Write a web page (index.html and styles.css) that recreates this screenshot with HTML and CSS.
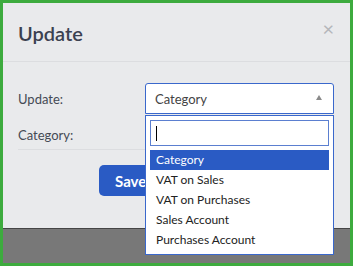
FILE: index.html
```
<!DOCTYPE html>
<html>
<head>
<meta charset="utf-8">
<link rel="stylesheet" href="styles.css">
</head>
<body>
<div class="frame">
  <div class="modal">
    <div class="modal-header">
      <h1 class="title">Update</h1>
      <span class="close">×</span>
    </div>
    <div class="modal-body">
      <div class="row row-update">
        <label class="label">Update:</label>
        <div class="select">
          <span class="select-text">Category</span>
          <span class="arrow"></span>
        </div>
      </div>
      <div class="row row-category">
        <label class="label">Category:</label>
      </div>
      <div class="actions">
        <button class="btn">Save</button>
      </div>
    </div>
  </div>
  <div class="backdrop"></div>
  <div class="dropdown">
    <div class="search"><span class="caret"></span></div>
    <ul class="options">
      <li class="option active">Category</li>
      <li class="option">VAT on Sales</li>
      <li class="option">VAT on Purchases</li>
      <li class="option">Sales Account</li>
      <li class="option">Purchases Account</li>
    </ul>
  </div>
</div>
</body>
</html>
```
FILE: styles.css
```
* { box-sizing: border-box; }
html, body { margin: 0; padding: 0; }
body {
  font-family: Lato, "Open Sans", sans-serif;
  width: 353px;
  height: 266px;
  overflow: hidden;
}
.frame {
  position: relative;
  width: 353px;
  height: 266px;
  border: 3px solid #3dab3e;
  display: flex;
  flex-direction: column;
  background: #787878;
}
.modal {
  height: 225px;
  background: #e9eaec;
  display: flex;
  flex-direction: column;
}
.modal-header {
  height: 59px;
  border-bottom: 1px solid #dcdde0;
  display: flex;
  align-items: center;
  justify-content: space-between;
  padding: 0 16px 0 15px;
}
.title {
  margin: 0;
  font-size: 20px;
  font-weight: 600;
  color: #3b4150;
  line-height: 24px;
  padding-top: 2px;
}
.close {
  font-size: 20px;
  color: #b4b6ba;
  line-height: 20px;
  margin-top: -9px;
}
.modal-body {
  padding: 21px 16px 0 15px;
}
.row {
  display: flex;
  align-items: center;
}
.row-update { height: 31px; }
.label {
  width: 127px;
  font-size: 13px;
  color: #454a55;
}
.select {
  width: 189px;
  height: 31px;
  background: #fff;
  border: 1px solid #3a68cc;
  border-radius: 3px 3px 0 0;
  display: flex;
  align-items: center;
  justify-content: space-between;
  padding: 0 11px 0 9px;
}
.select-text {
  font-size: 13px;
  color: #444;
}
.arrow {
  width: 0;
  height: 0;
  border-left: 3.5px solid transparent;
  border-right: 3.5px solid transparent;
  border-bottom: 5px solid #8a8a8a;
  margin-top: -3px;
}
.row-category {
  height: 36px;
  border-bottom: 1px solid #dcdde0;
  align-items: flex-start;
  padding-top: 13px;
}
.actions {
  padding: 15px 0 0 81px;
}
.btn {
  width: 90px;
  height: 31px;
  padding: 0 0 0 16px;
  text-align: left;
  background: #2a5bc4;
  color: #fff;
  border: none;
  border-radius: 5px;
  font-family: Lato, sans-serif;
  font-weight: 700;
  font-size: 15px;
}
.backdrop {
  flex: 1;
  border-top: 1px solid #454545;
  background: #787878;
}
.dropdown {
  position: absolute;
  left: 142px;
  top: 112px;
  width: 189px;
  height: 140px;
  background: #fff;
  border: 1px solid #3a68cc;
  padding: 4px;
}
.search {
  height: 26px;
  border: 1px solid #5b7fd0;
  display: flex;
  align-items: center;
  padding-left: 5px;
}
.caret {
  width: 1px;
  height: 15px;
  background: #000;
}
.options {
  list-style: none;
  margin: 4px 0 0;
  padding: 0;
}
.option {
  height: 20px;
  line-height: 20px;
  font-size: 12px;
  color: #222;
  padding-left: 6px;
}
.option.active {
  background: #2a5bc4;
  color: #fff;
}
```
